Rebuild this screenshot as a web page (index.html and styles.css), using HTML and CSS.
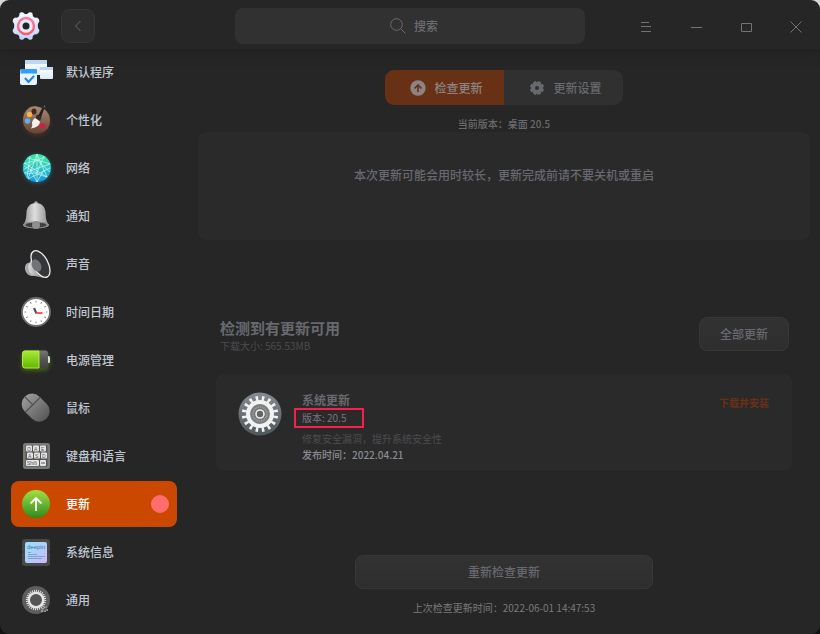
FILE: index.html
```
<!DOCTYPE html>
<html lang="zh-CN">
  <head>
    <meta charset="UTF-8" />
    <meta name="viewport" content="width=device-width, initial-scale=1.0" />
    <title>控制中心</title>
    <link rel="stylesheet" href="styles.css">
  </head>
  <body>
    <div class="window">
      <header class="titlebar">
        <div class="titlebar-left">
          <svg class="app-icon" viewBox="0 0 32 32">
            <defs>
              <linearGradient id="appGear" x1="0" y1="0" x2="0" y2="1">
                <stop offset="0" stop-color="#f4fcff" />
                <stop offset="1" stop-color="#bcd3fa" />
              </linearGradient>
              <linearGradient id="appRing" x1="0" y1="0" x2="0" y2="1">
                <stop offset="0" stop-color="#ff7ba0" />
                <stop offset="1" stop-color="#fd5a6c" />
              </linearGradient>
            </defs>
            <g fill="url(#appGear)">
              <path d="M9.500 3.300Q11 1.600 13.100 2.500Q14.500 4.200 16 4.200Q17.500 4.200 18.900 2.500Q21 1.600 22.500 3.300Q22.300 5.600 23.400 6.800Q24.600 8 27 7.600Q29.400 8.800 29.400 11.200Q27.600 13.600 27.800 16Q27.600 18 29.500 20.400Q29 23 26.700 24.200Q24.400 24 23.400 25.200Q22.300 26.400 22.500 28.700Q21 30.400 18.900 29.500Q17.500 27.800 16 27.800Q14.500 27.800 13.100 29.500Q11 30.400 9.500 28.700Q9.700 26.400 8.600 25.200Q7.600 24 5.300 24.200Q3 23 2.500 20.400Q4.400 18 4.200 16Q4.400 13.600 2.600 11.200Q2.600 8.800 5 7.600Q7.400 8 8.600 6.800Q9.700 5.600 9.500 3.300Z" />
            </g>
            <circle cx="16" cy="16" r="8" fill="#e5eafa" stroke="url(#appRing)" stroke-width="2.400" />
            <circle cx="16" cy="16" r="3.500" fill="#222" />
          </svg>
          <button class="back" aria-label="返回">
            <svg width="16" height="16" viewBox="0 0 16 16" fill="none" stroke="currentColor"><path d="M10.500 3L5.500 8l5 5" /></svg>
          </button>
        </div>
        <div class="search">
          <svg width="18" height="18" viewBox="0 0 18 18" fill="none" stroke="currentColor"><circle cx="6.500" cy="6.500" r="5.800" /><path d="M11 11l4.500 4.500" /></svg>
          <input type="text" placeholder="搜索" aria-label="搜索" />
        </div>
        <div class="controls">
          <button aria-label="菜单"><svg width="14" height="14" viewBox="0 0 14 14"><path d="M3 2.500h8M3 6.500h10M3 11.500h10" /></svg></button>
          <button aria-label="最小化"><svg width="14" height="14" viewBox="0 0 14 14"><path d="M3 7.500h11" /></svg></button>
          <button aria-label="最大化"><svg width="14" height="14" viewBox="0 0 14 14"><path d="M3.500 3.500h10v8h-10z" /></svg></button>
          <button aria-label="关闭"><svg width="14" height="14" viewBox="0 0 14 14"><path d="M2.500 1.500l11 11M13.500 1.500l-11 11" /></svg></button>
        </div>
      </header>

      <nav class="sidebar">
        <a href="#default-apps">
          <svg viewBox="0 0 32 32">
            <defs>
              <linearGradient id="win" x1="0" y1="0" x2="0" y2="1">
                <stop offset="0" stop-color="#fff" />
                <stop offset="1" stop-color="#dce8fb" />
              </linearGradient>
            </defs>
            <rect x="5" y="4" width="22" height="15" rx="1" fill="url(#win)" />
            <path d="M5 4h22v4H5z" fill="#bcd7f6" />
            <rect x="20" y="11" width="13" height="12" rx="1" fill="url(#win)" />
            <path d="M20 11h13v3H20z" fill="#bcd7f6" />
            <rect x="0" y="13" width="17" height="16" rx="2" fill="#e9f1fd" />
            <path d="M0.500 17.500V14q0-1 1-1h14.500q1 0 1 1v3.500z" fill="#2ea0fb" />
            <path d="M5 22l3.500 4 5.500-6" fill="none" stroke="#1687ee" stroke-width="2" />
          </svg>
          <span>默认程序</span>
        </a>
        <a href="#personalization">
          <svg viewBox="0 0 32 32" class="glow-brown">
            <defs>
              <linearGradient id="palette" x1="0" y1="0" x2="0" y2="1">
                <stop offset="0" stop-color="#a98a77" />
                <stop offset="1" stop-color="#664434" />
              </linearGradient>
            </defs>
            <path d="M17 2.500C8 1 3 9 3 16c0 8 6 13.500 13.500 13.500C25 29.500 30 24 30 16.500 30 9 25 4 17 2.500z" fill="url(#palette)" />
            <ellipse cx="14" cy="7.500" rx="2.500" ry="3" fill="#46291d" />
            <circle cx="9.500" cy="10.500" r="2.700" fill="#f9b33f" />
            <circle cx="7.500" cy="17" r="2.700" fill="#62aee9" />
            <circle cx="22.500" cy="22" r="2.700" fill="#df1645" />
            <path d="M18 12L23.500 1.500l1.500 1L21 13.500z" fill="#25221f" />
            <path d="M24 4L24.500 1" stroke="#666" stroke-width="1" />
            <path d="M17 10.500l4.500 3-1.500 3.500-4.500-3z" fill="#302d2b" />
            <path d="M15 14l5 3.500Q20 23 11 24.500q2-3 1-6 .5-3 3-4.500z" fill="#f5f2ed" />
          </svg>
          <span>个性化</span>
        </a>
        <a href="#network">
          <svg viewBox="0 0 32 32" class="glow-cyan">
            <defs>
              <linearGradient id="net" x1="0" y1="0" x2="0" y2="1">
                <stop offset="0" stop-color="#40e4a0" />
                <stop offset=".5" stop-color="#36c6c7" />
                <stop offset="1" stop-color="#1793dc" />
              </linearGradient>
            </defs>
            <circle cx="17" cy="16" r="14" fill="url(#net)" />
            <path d="M17 2L8 27M17 2l10 23M17 2v28M3.500 12L17 8l13 4M3.500 18L17 8l13 12M4 21l26-9M4 11l23 14M8 27l22-11M7 6l10 2 8-3M5 22l9-1 13 4M10 4L7 26M24 4l-7 17-13-7M17 30l7-12M17 30l-7-13" fill="none" stroke="#c6fff1" stroke-width=".8" opacity=".85" />
          </svg>
          <span>网络</span>
        </a>
        <a href="#notification">
          <svg viewBox="0 0 32 32">
            <defs>
              <linearGradient id="bell" x1="0" y1="0" x2="1" y2="0">
                <stop offset="0" stop-color="#8f8f8f" />
                <stop offset=".45" stop-color="#dedede" />
                <stop offset="1" stop-color="#8d8d8d" />
              </linearGradient>
            </defs>
            <circle cx="16" cy="3" r="1.800" fill="#aaa" />
            <path d="M16 3c-6 0-9 4-9.500 9-.3 6-.5 9-3.500 13 0 4 26 4 26 0-3-4-3.200-7-3.500-13C25 7 22 3 16 3z" fill="url(#bell)" />
            <ellipse cx="16" cy="25" rx="13" ry="3.500" fill="#898989" />
            <ellipse cx="16" cy="25" rx="10.500" ry="2.300" fill="#3f3f3f" />
            <circle cx="16" cy="25" r="4" fill="#8d9092" />
          </svg>
          <span>通知</span>
        </a>
        <a href="#sound">
          <svg viewBox="0 0 32 32">
            <defs>
              <linearGradient id="horn" x1="0" y1="0" x2="1" y2="0">
                <stop offset="0" stop-color="#ddd" />
                <stop offset="1" stop-color="#777" />
              </linearGradient>
            </defs>
            <ellipse cx="10.500" cy="21.500" rx="5.500" ry="7" transform="rotate(-25 10 21)" fill="#aaa9b1" />
            <path d="M12 3Q12 13 8.500 17q-1 6 4 10.500l12 2.500z" fill="url(#horn)" />
            <ellipse cx="20.500" cy="16" rx="7.500" ry="14.500" transform="rotate(-28 20.500 16)" fill="#343638" stroke="#eee" stroke-width="1.300" />
            <ellipse cx="16.500" cy="17.500" rx="4.500" ry="6.500" transform="rotate(-28 16.500 17.500)" fill="#717376" />
          </svg>
          <span>声音</span>
        </a>
        <a href="#datetime">
          <svg viewBox="0 0 32 32">
            <circle cx="16" cy="16" r="14" fill="#fff" stroke="#6e6e6e" stroke-width="1.800" />
            <circle cx="16" cy="16" r="10.500" fill="none" stroke="#555" stroke-width="1.600" pathLength="120" stroke-dasharray="1.500 8.500" stroke-dashoffset=".75" />
            <path d="M16.500 17.500l-2.500-5.500" stroke="#4d5358" stroke-width="2.200" />
            <path d="M16.500 17h6" stroke="#ff5a5a" stroke-width="2" />
          </svg>
          <span>时间日期</span>
        </a>
        <a href="#power">
          <svg viewBox="0 0 32 32" class="glow-green">
            <defs>
              <linearGradient id="charge" x1="0" y1="0" x2="0" y2="1">
                <stop offset="0" stop-color="#a8e93a" />
                <stop offset="1" stop-color="#61b800" />
              </linearGradient>
              <linearGradient id="shell" x1="0" y1="0" x2="0" y2="1">
                <stop offset="0" stop-color="#777" />
                <stop offset=".5" stop-color="#555" />
                <stop offset="1" stop-color="#414141" />
              </linearGradient>
            </defs>
            <rect x="26" y="12" width="4" height="7" rx="1.500" fill="#ddd" />
            <rect x="2" y="6.500" width="26" height="18" rx="3" fill="url(#shell)" />
            <path d="M19 7H5q-2.500 0-2.500 2.500v12q0 2.500 2.500 2.500h14z" fill="url(#charge)" stroke="#b5ed35" />
          </svg>
          <span>电源管理</span>
        </a>
        <a href="#mouse">
          <svg viewBox="0 0 32 32">
            <defs>
              <linearGradient id="mouse" x1="0" y1="0" x2="0" y2="1">
                <stop offset="0" stop-color="#9b9b9b" />
                <stop offset="1" stop-color="#595959" />
              </linearGradient>
            </defs>
            <g transform="rotate(-45 16 16)">
              <rect x="5.500" y="0" width="21" height="31" rx="10.500" fill="url(#mouse)" />
              <path d="M5.500 11.500h21M16 0v11.500" fill="none" stroke="#4d4d4d" stroke-width="1.200" />
            </g>
          </svg>
          <span>鼠标</span>
        </a>
        <a href="#keyboard">
          <svg viewBox="0 0 32 32">
            <rect x="3" y="3" width="27" height="26" rx="2.500" fill="#797979" />
            <path d="M5.500 5.500h22v21h-22z" fill="#555" />
            <g fill="#e5e5e5">
              <rect x="6" y="5.500" width="6" height="6" rx="1" /><rect x="13" y="5.500" width="6" height="6" rx="1" /><rect x="20" y="5.500" width="6" height="6" rx="1" />
              <rect x="7" y="12.500" width="6" height="6" rx="1" /><rect x="14" y="12.500" width="6" height="6" rx="1" /><rect x="21" y="12.500" width="6" height="6" rx="1" />
              <rect x="6" y="20" width="13" height="6" rx="1" /><rect x="20" y="20" width="6" height="6" rx="1" />
            </g>
            <g class="keys">
              <text x="7" y="11">Q</text><text x="14" y="11">A</text><text x="21" y="11">E</text>
              <text x="8" y="18">A</text><text x="15" y="18">S</text><text x="22" y="18">D</text>
              <text x="7" y="25">Shift</text>
            </g>
            <path d="M21 23h4" stroke="#555" />
          </svg>
          <span>键盘和语言</span>
        </a>
        <a href="#update" class="active">
          <svg viewBox="0 0 32 32">
            <defs>
              <linearGradient id="upd" x1="0" y1="0" x2="0" y2="1">
                <stop offset="0" stop-color="#a2e044" />
                <stop offset="1" stop-color="#308a1d" />
              </linearGradient>
            </defs>
            <circle cx="16" cy="16" r="14" fill="url(#upd)" />
            <path d="M16 23V10M10.500 15.500L16 10l5.500 5.500" fill="none" stroke="#fff" stroke-width="1.800" />
          </svg>
          <span>更新</span>
          <i class="dot"></i>
        </a>
        <a href="#system">
          <svg viewBox="0 0 32 32">
            <defs>
              <linearGradient id="sys" x1="0" y1="0" x2="1" y2="1">
                <stop offset="0" stop-color="#91e5fc" />
                <stop offset="1" stop-color="#ccb7fb" />
              </linearGradient>
            </defs>
            <rect x="2" y="3" width="28" height="27" rx="3" fill="#484848" />
            <path d="M1 14l2 2-2 2zM31 14l-2 2 2 2z" fill="#222" />
            <rect x="5" y="6" width="22" height="21" rx="2" fill="url(#sys)" />
            <text x="7" y="13" class="brand">deepin</text>
            <path d="M8 16.500h3M8 18.500h9M8 20.500h17M8 22.500h14" stroke="#7597b7" stroke-width=".8" />
          </svg>
          <span>系统信息</span>
        </a>
        <a href="#general">
          <svg viewBox="0 0 32 32">
            <circle cx="16" cy="16" r="14" fill="#5d5d5d" />
            <circle cx="16" cy="16" r="9.200" fill="none" stroke="#ddd" stroke-width="2" pathLength="56" stroke-dasharray="1 1" />
            <circle cx="16" cy="16" r="7.300" fill="#555" stroke="#e5e5e5" stroke-width="2.600" />
            <path d="M22 28q0-5 5-5M25 28q0-2 3-2" fill="none" stroke="#bbb" stroke-width="1.500" stroke-dasharray="1.500 1" />
          </svg>
          <span>通用</span>
        </a>
      </nav>

      <main class="content">
        <div class="tabs">
          <button class="tab selected">
            <svg width="16" height="16" viewBox="0 0 16 16"><circle cx="8" cy="8" r="7.700" fill="currentColor" /><path d="M8 12V5M4.500 8.500L8 5l3.500 3.500" fill="none" stroke="#683116" stroke-width="1.700" /></svg>
            检查更新
          </button>
          <button class="tab">
            <svg width="16" height="16" viewBox="0 0 16 16"><circle cx="8" cy="8" r="4" fill="none" stroke="currentColor" stroke-width="4" /><circle cx="8" cy="8" r="6" fill="none" stroke="currentColor" stroke-width="2" pathLength="16" stroke-dasharray="1.300 .7" stroke-dashoffset="-.35" /></svg>
            更新设置
          </button>
        </div>
        <p class="small current">当前版本：桌面 20.5</p>
        <section class="notice">本次更新可能会用时较长，更新完成前请不要关机或重启</section>

        <div class="available">
          <div>
            <h1>检测到有更新可用</h1>
            <p class="size">下载大小: 565.53MB</p>
          </div>
          <button class="btn">全部更新</button>
        </div>

        <section class="update-card">
          <svg class="gear" viewBox="0 0 44 44">
            <defs>
              <linearGradient id="disc" x1="0" y1="0" x2="0" y2="1">
                <stop offset="0" stop-color="#858b90" />
                <stop offset="1" stop-color="#50575a" />
              </linearGradient>
            </defs>
            <circle cx="22" cy="22" r="21.500" fill="url(#disc)" />
            <circle cx="22" cy="22" r="15.700" fill="none" stroke="#f2f2f2" stroke-width="5" pathLength="32" stroke-dasharray=".8 1.200" stroke-dashoffset="-.6" />
            <circle cx="22" cy="22" r="12" fill="#7b7e7e" stroke="#f2f2f2" stroke-width="4" />
            <circle cx="22" cy="22" r="7" fill="none" stroke="#a5a19b" stroke-width="1.500" pathLength="48" stroke-dasharray="1 1" />
            <circle cx="22" cy="22" r="5.800" fill="#73706c" />
            <circle cx="22" cy="22" r="4" fill="#606566" stroke="#eee" stroke-width="1.600" />
          </svg>
          <div class="details">
            <h2>系统更新</h2>
            <p class="version">版本: 20.5</p>
            <p class="desc">修复安全漏洞，提升系统安全性</p>
            <p class="date">发布时间：2022.04.21</p>
          </div>
          <a href="#install" class="install">下载并安装</a>
        </section>

        <footer>
          <button class="btn wide">重新检查更新</button>
          <p class="small">上次检查更新时间：2022-06-01 14:47:53</p>
        </footer>
      </main>
    </div>
  </body>
</html>
```

FILE: styles.css
```
* {
  box-sizing: border-box;
}
html {
  background: linear-gradient(#d8d8d8, #111);
}
body {
  margin: 0;
  font-family: "Noto Sans CJK SC", sans-serif;
  font-size: 12px;
  font-weight: 500;
  line-height: 18px;
  color: #68696f;
}
h1, h2, p {
  margin: 0;
}
button, input {
  font: inherit;
  color: inherit;
  border: 0;
  padding: 0;
  background: none;
}
a {
  text-decoration: none;
}
.window {
  display: grid;
  grid-template: 49px 1fr / 188px 1fr;
  min-height: 100vh;
  border-radius: 9px;
  overflow: hidden;
  background: #262626;
}

/* title bar */
.titlebar {
  grid-column: 1 / -1;
  display: grid;
  grid-template-columns: 1fr 350px 1fr;
  align-items: center;
  padding-top: 2px;
  box-shadow: 0 2px 10px #202020;
}
.titlebar-left {
  display: flex;
  align-items: center;
  gap: 19px;
  padding-left: 10px;
}
.app-icon {
  width: 32px;
  height: 32px;
}
.back {
  display: grid;
  place-items: center;
  width: 34px;
  height: 34px;
  border: 1px solid #353535;
  border-radius: 8px;
  background: #2d2d2d;
}
.search {
  position: relative;
  color: #6b6b70;
}
.search input {
  display: block;
  width: 100%;
  height: 36px;
  padding-left: 32px;
  border-radius: 8px;
  background: #313131;
  text-align: center;
}
.search input::placeholder {
  color: #6b6b70;
}
.search svg {
  position: absolute;
  top: 10px;
  left: calc(50% - 20px);
}
.controls {
  display: flex;
  justify-content: flex-end;
}
.controls button {
  display: grid;
  place-items: center;
  width: 50px;
  height: 46px;
  padding-top: 2px;
  stroke: #727277;
  fill: none;
}

/* sidebar */
.sidebar {
  display: flex;
  flex-direction: column;
  gap: 2px;
  padding: 0 11px 11px;
}
.sidebar a {
  display: flex;
  align-items: center;
  gap: 14px;
  height: 46px;
  padding: 0 8px 0 9px;
  border-radius: 8px;
  color: #c0c6d4;
}
.sidebar svg {
  width: 32px;
  height: 32px;
  overflow: visible;
}
.sidebar .active {
  background: #cb4800;
  color: #fff;
}
.dot {
  width: 18px;
  height: 18px;
  margin-left: auto;
  border-radius: 50%;
  background: #ff6c6c;
}
.glow-brown {
  filter: drop-shadow(0 2px 2px #7a3c2080);
}
.glow-cyan {
  filter: drop-shadow(0 1px 2px #1aa0d080);
}
.glow-green {
  filter: drop-shadow(0 2px 2px #62a80080);
}
.keys {
  font: 5px "Liberation Sans", sans-serif;
  fill: #555;
}
.brand {
  font: 6px "Liberation Sans", sans-serif;
  fill: #4a7792;
}

/* content */
.content {
  display: flex;
  flex-direction: column;
  padding: 21px 10px 18px;
}
.tabs {
  display: flex;
  align-self: center;
  border-radius: 9px;
  overflow: hidden;
}
.tab {
  display: flex;
  align-items: center;
  justify-content: center;
  gap: 8px;
  width: 119px;
  height: 35px;
  padding-left: 4px;
  background: #303030;
}
.tab.selected {
  background: #683116;
  color: #8a8584;
}
.small {
  font-size: 10px;
  line-height: 16px;
  text-align: center;
  color: #6b6b6b;
}
.current {
  margin-top: 11px;
}
.notice {
  padding: 34px 20px 56px;
  border-radius: 8px;
  background: #2a2a2a;
  text-align: center;
}
.available {
  display: flex;
  justify-content: space-between;
  align-items: flex-start;
  margin-top: 77px;
  padding: 0 21px 0 22px;
}
h1 {
  font-size: 15px;
  line-height: 22px;
}
.size {
  font-size: 10px;
  font-weight: 400;
  line-height: 14px;
  color: #4a4d50;
}
.btn {
  width: 90px;
  height: 34px;
  border: 1px solid #373737;
  border-radius: 8px;
  background: linear-gradient(#323232, #2e2e2e);
}
.update-card {
  display: flex;
  align-items: flex-start;
  gap: 20px;
  margin: 21px 18px 0;
  padding: 18px 23px 8px 22px;
  border-radius: 8px;
  background: #2a2a2a;
}
.gear {
  width: 44px;
  height: 44px;
}
.details {
  font-size: 10px;
  line-height: 16px;
}
h2 {
  font-size: 12px;
  line-height: 16px;
}
.version {
  width: 70px;
  margin: 0 0 3px -8px;
  padding-left: 6px;
  border: 2px solid #fa1e50;
  font-weight: 400;
  color: #76777d;
}
.desc {
  font-weight: 400;
  color: #4a4d50;
}
.date {
  color: #8b8c91;
}
.install {
  margin-left: auto;
  padding-top: 2px;
  font-size: 10px;
  font-weight: 700;
  color: #6a3014;
}
footer {
  display: flex;
  flex-direction: column;
  align-items: center;
  gap: 11px;
  margin-top: auto;
}
footer .small {
  font-weight: 400;
  color: #7a7a7a;
}
.wide {
  width: 298px;
}
```
